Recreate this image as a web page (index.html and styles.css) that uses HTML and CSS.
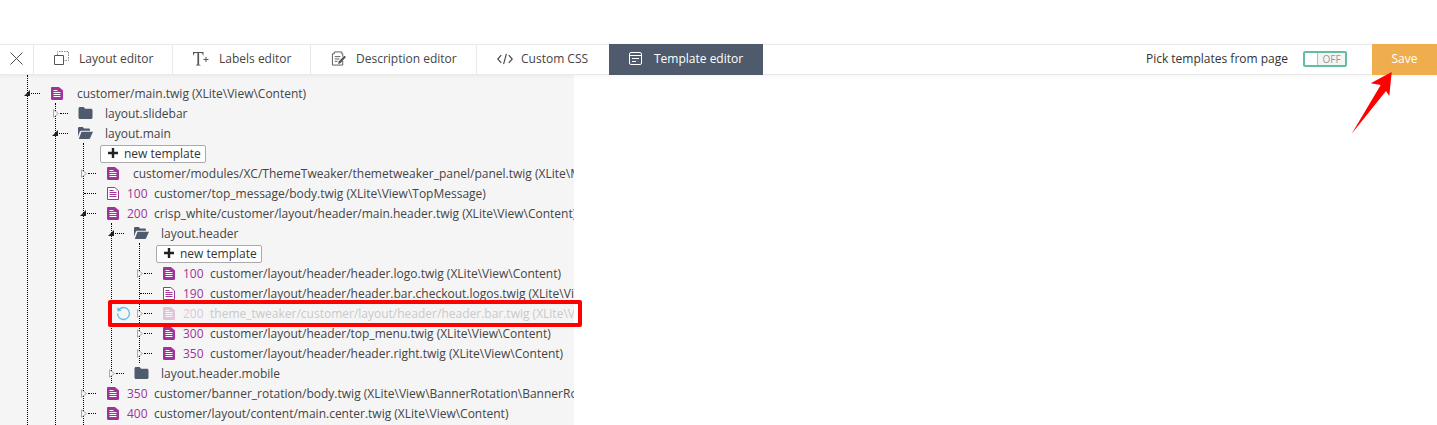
FILE: index.html
```html
<!doctype html>
<html lang="en">
<head>
    <meta charset="utf-8">
    <title>Template editor</title>
    <link rel="stylesheet" href="styles.css">
</head>
<body>
    <svg class="defs" width="0" height="0">
        <symbol id="file" viewBox="0 0 12 13">
            <path fill="#a0329a" d="M1.2 0H8l4 3.6v8.2c0 .7-.5 1.2-1.2 1.2H1.2C.5 13 0 12.500 0 11.800V1.200C0 .5.500 0 1.200 0z"/>
            <path fill="none" stroke="#fff" d="M2.500 5.500h7M2.500 7.500h7M2.500 9.500h7M2.500 3.500h4"/>
        </symbol>
        <symbol id="file-line" viewBox="0 0 12 13">
            <path fill="#fff" stroke="#a0329a" d="M.5.500h7.300l3.700 3.300v8.700H.5z"/>
            <path fill="none" stroke="#a0329a" d="M2.500 5.500h7M2.500 7.500h7M2.500 9.500h7M2.500 3.500h4"/>
        </symbol>
        <symbol id="folder" viewBox="0 0 14 12">
            <path fill="#4f5b6d" d="M1.500 0h3.700l1.400 1.800h5.900c.8 0 1.500.7 1.500 1.500v7.200c0 .8-.7 1.500-1.500 1.500h-11C.7 12 0 11.300 0 10.500v-9C0 .7.700 0 1.500 0z"/>
        </symbol>
        <symbol id="folder-open" viewBox="0 0 15 12">
            <path fill="#4f5b6d" d="M0 9.500V1.300C0 .6.500 0 1.200 0h3.600l1.300 1.500h4.700c.7 0 1.200.5 1.200 1.200v1H3.500C2.800 3.700 2.200 4 1.900 4.600z"/>
            <path fill="#4f5b6d" d="M3.500 4.700H15l-2.800 6.400c-.2.500-.7.900-1.300.9H.8z"/>
        </symbol>
        <symbol id="open" viewBox="0 0 6 6">
            <path fill="#222" d="M6 0v6H0z"/>
        </symbol>
        <symbol id="closed" viewBox="0 0 6 9">
            <path fill="#f5f5f5" stroke="#aaa" d="M.5.800l5 3.700-5 3.700z"/>
        </symbol>
    </svg>

    <div class="topgap"></div>

    <nav class="toolbar">
        <button class="close-tab">
            <svg width="13" height="13" viewBox="0 0 13 13"><path fill="none" stroke="#4a4a4a" d="M.5.500l12 12M12.500.500l-12 12"/></svg>
        </button>
        <a class="tab tab-layout">
            <svg width="15" height="15" viewBox="0 0 15 15"><path fill="none" stroke="#555" d="M.5 4.500h9v9h-9z"/><path fill="none" stroke="#888" stroke-dasharray="1.500 1" d="M3.500 4V.5h11v9h-4.500"/></svg>
            Layout editor
        </a>
        <a class="tab tab-labels">
            <svg width="16" height="14" viewBox="0 0 16 14"><path fill="#555" d="M0 0h10.500v3.500H10C9.800 1.800 9.300 1 7.800 1H6.100v11c0 .6.400.9 1.400.9v.6H3v-.6c1 0 1.400-.3 1.400-.9V1H2.700C1.200 1 .7 1.800.5 3.500H0z"/><path fill="none" stroke="#555" d="M10.500 7.500h5M13 5v5"/></svg>
            Labels editor
        </a>
        <a class="tab tab-desc">
            <svg width="15" height="15" viewBox="0 0 16 15"><path fill="none" stroke="#555" d="M1.500 2.500h2v-2h8v2h1v3M12.500 10v4.500h-11v-12"/><path fill="none" stroke="#555" d="M4 5.500h6M4 8h5M4 10.500h3"/><path fill="#555" d="M14.200 4.500L16 6l-6 6.500-2.500.800.700-2.600z"/></svg>
            Description editor
        </a>
        <a class="tab tab-css">
            <svg width="16" height="12" viewBox="0 0 17 12"><path fill="none" stroke="#444" stroke-width="1.200" d="M4.500 2L.8 6l3.700 4M12.500 2l3.700 4-3.700 4M10 .5L7 11.500"/></svg>
            Custom CSS
        </a>
        <a class="tab tab-active">
            <svg width="13" height="13" viewBox="0 0 13 13"><rect x=".5" y=".5" width="12" height="12" rx="1.500" fill="none" stroke="#fff"/><path fill="none" stroke="#fff" d="M0 3.500h13M3 6.500h7M3 9.500h4"/></svg>
            Template editor
        </a>
        <div class="pick">
            <span>Pick templates from page</span>
            <span class="switch"><i class="switch-knob"></i><b>OFF</b></span>
        </div>
        <button class="save">Save</button>
    </nav>

    <div class="workspace">
        <div class="tree-panel">
            <ul class="tree tree-root">
                <li>
                    <div class="row">
                        <span class="toggle"><svg class="arrow-open"><use href="#open"/></svg><i class="dash"></i></span>
                        <svg class="icon"><use href="#file"/></svg>
                        <span class="name">customer/main.twig (XLite\View\Content)</span>
                    </div>
                    <ul class="tree">
                        <li>
                            <div class="row">
                                <span class="toggle toggle-closed"><svg class="arrow-closed"><use href="#closed"/></svg><i class="dash"></i></span>
                                <svg class="icon-folder"><use href="#folder"/></svg>
                                <span class="name">layout.slidebar</span>
                            </div>
                        </li>
                        <li>
                            <div class="row">
                                <span class="toggle"><svg class="arrow-open"><use href="#open"/></svg><i class="dash"></i></span>
                                <svg class="icon-folder"><use href="#folder-open"/></svg>
                                <span class="name">layout.main</span>
                            </div>
                            <ul class="tree tree-tail">
                                <li class="row"><button class="new-btn"><svg width="10" height="10" viewBox="0 0 10 10"><path fill="#222" d="M3.800 0h2.400v3.800H10v2.400H6.200V10H3.800V6.200H0V3.800h3.800z"/></svg>new template</button></li>
                                <li>
                                    <div class="row">
                                        <span class="toggle toggle-closed"><svg class="arrow-closed"><use href="#closed"/></svg><i class="dash"></i></span>
                                        <svg class="icon"><use href="#file"/></svg>
                                        <span class="name">customer/modules/XC/ThemeTweaker/themetweaker_panel/panel.twig (XLite\Module\XC\ThemeTweaker\View\ThemeTweakerPanel)</span>
                                    </div>
                                </li>
                                <li>
                                    <div class="row">
                                        <span class="toggle"><i class="dash dash-only"></i></span>
                                        <svg class="icon"><use href="#file-line"/></svg>
                                        <span class="num">100</span>
                                        <span class="name">customer/top_message/body.twig (XLite\View\TopMessage)</span>
                                    </div>
                                </li>
                                <li>
                                    <div class="row">
                                        <span class="toggle"><svg class="arrow-open"><use href="#open"/></svg><i class="dash"></i></span>
                                        <svg class="icon"><use href="#file"/></svg>
                                        <span class="num">200</span>
                                        <span class="name">crisp_white/customer/layout/header/main.header.twig (XLite\View\Content)</span>
                                    </div>
                                    <ul class="tree">
                                        <li>
                                            <div class="row">
                                                <span class="toggle"><svg class="arrow-open"><use href="#open"/></svg><i class="dash"></i></span>
                                                <svg class="icon-folder"><use href="#folder-open"/></svg>
                                                <span class="name">layout.header</span>
                                            </div>
                                            <ul class="tree">
                                                <li class="row"><button class="new-btn"><svg width="10" height="10" viewBox="0 0 10 10"><path fill="#222" d="M3.800 0h2.400v3.800H10v2.400H6.200V10H3.800V6.200H0V3.800h3.800z"/></svg>new template</button></li>
                                                <li>
                                                    <div class="row">
                                                        <span class="toggle toggle-closed"><svg class="arrow-closed"><use href="#closed"/></svg><i class="dash"></i></span>
                                                        <svg class="icon"><use href="#file"/></svg>
                                                        <span class="num">100</span>
                                                        <span class="name">customer/layout/header/header.logo.twig (XLite\View\Content)</span>
                                                    </div>
                                                </li>
                                                <li>
                                                    <div class="row">
                                                        <span class="toggle"><i class="dash dash-only"></i></span>
                                                        <svg class="icon"><use href="#file-line"/></svg>
                                                        <span class="num">190</span>
                                                        <span class="name">customer/layout/header/header.bar.checkout.logos.twig (XLite\View\Content)</span>
                                                    </div>
                                                </li>
                                                <li>
                                                    <div class="row row-reverted">
                                                        <svg class="revert" width="15" height="15" viewBox="0 0 15 15"><path fill="none" stroke="#5bbce4" stroke-width="1.300" d="M3.300 3.200A6 6 0 1 1 1.500 7.500"/><path fill="#5bbce4" d="M1.200 1.200l.3 4.300 4.200-.7z"/></svg>
                                                        <span class="toggle toggle-closed"><svg class="arrow-closed"><use href="#closed"/></svg><i class="dash"></i></span>
                                                        <svg class="icon fade"><use href="#file"/></svg>
                                                        <span class="num fade">200</span>
                                                        <span class="name fade">theme_tweaker/customer/layout/header/header.bar.twig (XLite\View\Content)</span>
                                                    </div>
                                                </li>
                                                <li>
                                                    <div class="row">
                                                        <span class="toggle toggle-closed"><svg class="arrow-closed"><use href="#closed"/></svg><i class="dash"></i></span>
                                                        <svg class="icon"><use href="#file"/></svg>
                                                        <span class="num">300</span>
                                                        <span class="name">customer/layout/header/top_menu.twig (XLite\View\Content)</span>
                                                    </div>
                                                </li>
                                                <li>
                                                    <div class="row">
                                                        <span class="toggle toggle-closed"><svg class="arrow-closed"><use href="#closed"/></svg><i class="dash"></i></span>
                                                        <svg class="icon"><use href="#file"/></svg>
                                                        <span class="num">350</span>
                                                        <span class="name">customer/layout/header/header.right.twig (XLite\View\Content)</span>
                                                    </div>
                                                </li>
                                            </ul>
                                        </li>
                                        <li>
                                            <div class="row">
                                                <span class="toggle toggle-closed"><svg class="arrow-closed"><use href="#closed"/></svg><i class="dash"></i></span>
                                                <svg class="icon-folder"><use href="#folder"/></svg>
                                                <span class="name">layout.header.mobile</span>
                                            </div>
                                        </li>
                                    </ul>
                                </li>
                                <li>
                                    <div class="row">
                                        <span class="toggle toggle-closed"><svg class="arrow-closed"><use href="#closed"/></svg><i class="dash"></i></span>
                                        <svg class="icon"><use href="#file"/></svg>
                                        <span class="num">350</span>
                                        <span class="name">customer/banner_rotation/body.twig (XLite\View\BannerRotation\BannerRotation)</span>
                                    </div>
                                </li>
                                <li>
                                    <div class="row">
                                        <span class="toggle toggle-closed"><svg class="arrow-closed"><use href="#closed"/></svg><i class="dash"></i></span>
                                        <svg class="icon"><use href="#file"/></svg>
                                        <span class="num">400</span>
                                        <span class="name">customer/layout/content/main.center.twig (XLite\View\Content)</span>
                                    </div>
                                </li>
                            </ul>
                        </li>
                    </ul>
                </li>
            </ul>
        </div>
        <div class="marker"></div>
    </div>

    <svg class="save-arrow" width="50" height="70" viewBox="0 0 50 70"><path fill="#f00" d="M40.700 2L19.700 13.300 29.700 15 .7 63.700 35 21l3.300 5z"/></svg>
</body>
</html>
```

FILE: styles.css
```css
html, body {
    height: 100%;
}

body {
    margin: 0;
    height: 425px;
    overflow: hidden;
    display: flex;
    flex-direction: column;
    font-family: 'Open Sans', sans-serif;
    font-size: 12px;
    color: #444;
    background-color: #fff;
}

button {
    font: inherit;
    cursor: pointer;
}

.defs {
    position: absolute;
}

.topgap {
    height: 44px;
    flex: none;
}

/* toolbar */
.toolbar {
    display: flex;
    height: 29px;
    flex: none;
    align-items: stretch;
    border-top: 1px solid #e9e9e9;
    border-bottom: 1px solid #e9e9e9;
    box-shadow: 0 1px 4px rgba(0, 0, 0, .05);
    position: relative;
    z-index: 1;
    background-color: #fff;
}

.close-tab {
    width: 33px;
    padding: 0 0 2px;
    border: 0;
    background: none;
    display: flex;
    align-items: center;
    justify-content: center;
}

.tab {
    display: flex;
    align-items: center;
    gap: 10px;
    box-sizing: border-box;
    padding: 0 0 2px 20px;
    border-left: 1px solid #e9e9e9;
    line-height: 1;
    white-space: nowrap;
}

.tab-layout {
    width: 139px;
}

.tab-labels {
    width: 138px;
}

.tab-desc {
    width: 166px;
}

.tab-css {
    width: 133px;
    gap: 8px;
}

.tab-active {
    width: 154px;
    margin-top: -1px;
    margin-bottom: -1px;
    border-left: 0;
    gap: 12px;
    color: #fff;
    background-color: #4f5b6d;
}

.pick {
    margin-left: auto;
    display: flex;
    align-items: center;
    gap: 15px;
    padding-right: 25px;
    padding-bottom: 2px;
    color: #333;
}

.switch {
    display: flex;
    width: 44px;
    height: 16px;
    box-sizing: border-box;
    border: 2px solid #62bda4;
    border-radius: 2px;
}

.switch-knob {
    width: 12px;
    border-right: 1px solid #bbb;
}

.switch b {
    flex: 1;
    text-align: center;
    font-size: 10px;
    font-weight: 400;
    line-height: 12px;
    color: #999;
    background-color: #f4f4f4;
}

.save {
    width: 65px;
    margin-top: -1px;
    margin-bottom: -1px;
    padding: 0 0 2px;
    border: 0;
    color: #fff;
    background-color: #f0ad4e;
}

/* tree */
.workspace {
    flex: 1;
    min-height: 0;
    position: relative;
}

.tree-panel {
    width: 574px;
    height: 100%;
    overflow: hidden;
    background-color: #f5f5f5;
}

.tree {
    list-style: none;
    margin: 0 0 0 27px;
    padding: 0;
    border-left: 1px dotted #000;
}

.tree-root {
    padding-top: 8px;
}

.tree-tail {
    padding-bottom: 40px;
}

.row {
    display: flex;
    align-items: center;
    height: 20px;
    white-space: nowrap;
    position: relative;
}

.toggle {
    width: 23px;
    flex: none;
    display: flex;
    align-items: center;
}

.arrow-open {
    width: 6px;
    height: 6px;
    margin-left: -4px;
    flex: none;
}

.arrow-closed {
    width: 6px;
    height: 9px;
    margin-left: -3px;
    flex: none;
}

.dash {
    width: 9px;
    margin-left: 1px;
    border-top: 1px dotted #000;
}

.dash-only {
    width: 12px;
    margin-left: 0;
}

.toggle-closed .dash {
    width: 8px;
}

.icon {
    width: 12px;
    height: 13px;
    margin-right: 8px;
    flex: none;
}

.icon-folder {
    width: 15px;
    height: 12px;
    margin-left: -1px;
    margin-right: 6px;
    flex: none;
}

.name {
    margin-left: 6px;
}

.num {
    width: 27px;
    flex: none;
    color: #a0329a;
}

.num + .name {
    margin-left: 0;
}

.fade {
    opacity: .25;
}

.revert {
    position: absolute;
    left: -24px;
    top: 3px;
}

.new-btn {
    display: flex;
    align-items: center;
    gap: 6px;
    height: 18px;
    margin-top: 2px;
    margin-left: 16px;
    padding: 0 4px 2px 7px;
    border: 1px solid #aaa;
    border-radius: 2px;
    color: #333;
    background-color: #fff;
}

/* annotations on top of the screenshot */
.marker {
    position: absolute;
    left: 108px;
    top: 225px;
    width: 466px;
    height: 19px;
    border: 4px solid #f00;
    border-radius: 2px;
}

.save-arrow {
    position: absolute;
    left: 1351px;
    top: 70px;
    z-index: 2;
}
```
